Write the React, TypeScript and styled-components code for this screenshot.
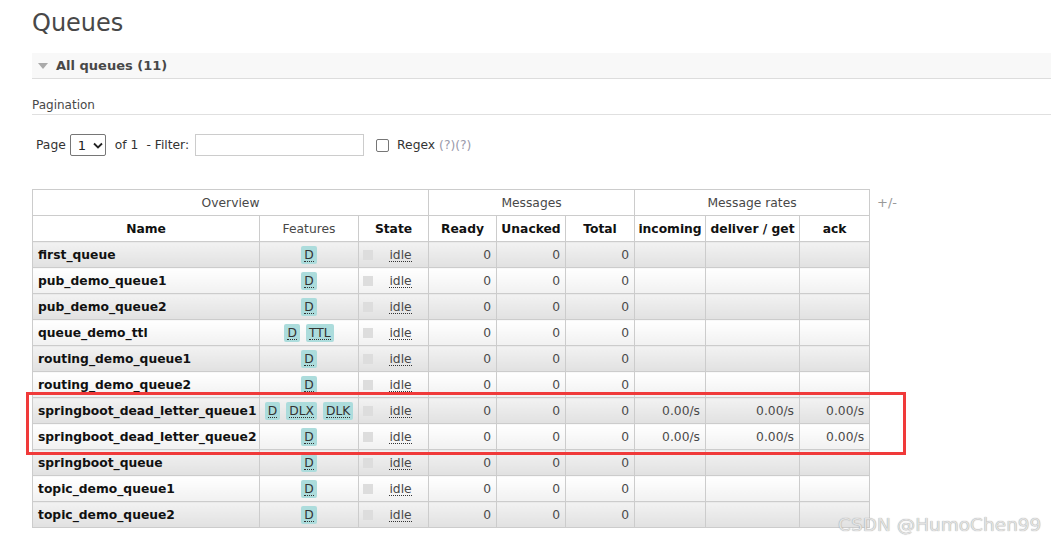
import React from 'react';
import styled, { createGlobalStyle } from 'styled-components';

const Global = createGlobalStyle`
  html, body { margin: 0; padding: 0; background: #fff; }
  body {
    font-family: "DejaVu Sans", Verdana, sans-serif;
    font-size: 12px;
    color: #484848;
    overflow: hidden;
  }
`;

const Page = styled.div`
  position: relative;
  width: 1051px;
  height: 544px;
  overflow: hidden;
  padding-left: 32px;
  box-sizing: border-box;
`;

const Title = styled.h1`
  margin: 8px 0 0 0;
  font-size: 24px;
  line-height: 30px;
  font-weight: normal;
  color: #484848;
`;

const SectionBar = styled.div`
  margin-top: 15px;
  height: 25px;
  background: #f8f8f8;
  border-bottom: 1px solid #ddd;
  display: flex;
  align-items: center;
  gap: 8px;
  padding-left: 6px;
  width: 1100px;
`;

const Triangle = styled.span`
  width: 0;
  height: 0;
  border-left: 5px solid transparent;
  border-right: 5px solid transparent;
  border-top: 6px solid #aaa;
  margin-top: 1px;
`;

const SectionTitle = styled.span`
  font-size: 13px;
  font-weight: bold;
  color: #484848;
`;

const SubHead = styled.div`
  margin-top: 19px;
  padding-bottom: 2px;
  line-height: 14px;
  font-size: 12px;
  color: #484848;
  border-bottom: 1px solid #e0e0e0;
  width: 1100px;
`;

const FilterRow = styled.div`
  margin-top: 19px;
  padding-left: 4px;
  display: flex;
  align-items: center;
  height: 22px;
  color: #333;
  font-size: 12.3px;
`;

const SelectBox = styled.div`
  margin-left: 4px;
  width: 36px;
  height: 22px;
  box-sizing: border-box;
  border: 1px solid #767676;
  border-radius: 2px;
  display: flex;
  align-items: center;
  padding-left: 7px;
  gap: 7px;
  color: #222;
  font-size: 13px;
`;

const Label = styled.span<{ $ml?: number }>`
  margin-left: ${(p) => p.$ml ?? 0}px;
  white-space: pre;
`;

const TextInput = styled.div`
  margin-left: 6px;
  width: 169px;
  height: 22px;
  box-sizing: border-box;
  border: 1px solid #ccc;
`;

const CheckBox = styled.span`
  margin-left: 12px;
  width: 13px;
  height: 13px;
  box-sizing: border-box;
  border: 1px solid #767676;
  border-radius: 2px;
`;

const Help = styled.span`
  color: #99a;
  margin-left: 4px;
`;

const TableWrap = styled.div`
  margin-top: 33px;
  display: flex;
  align-items: flex-start;
  gap: 7px;
`;

const Table = styled.table`
  border-collapse: collapse;
  table-layout: fixed;
  width: 837px;
  font-size: 12.3px;
`;

const Col = styled.col<{ $w: number }>`
  width: ${(p) => p.$w}px;
`;

const GroupTh = styled.th`
  height: 25px;
  padding: 0;
  border: 1px solid #ccc;
  font-weight: normal;
  color: #484848;
  background: #fff;
`;

const Th = styled.th<{ $light?: boolean }>`
  height: 25px;
  padding: 0 2px;
  border: 1px solid #ccc;
  font-weight: ${(p) => (p.$light ? 'normal' : 'bold')};
  color: ${(p) => (p.$light ? '#484848' : '#111')};
  background: #fff;
  white-space: nowrap;
`;

const Tr = styled.tr<{ $alt: boolean }>`
  td {
    background: ${(p) =>
      p.$alt
        ? 'linear-gradient(#f2f2f2, #e1e1e1)'
        : 'linear-gradient(#ffffff, #f1f1f1)'};
  }
`;

const NameTd = styled.td`
  height: 25px;
  padding: 0 5px;
  border: 1px solid #ccc;
  font-weight: bold;
  color: #111;
  white-space: nowrap;
  overflow: hidden;
`;

const FeatTd = styled.td`
  height: 25px;
  padding: 0 4px;
  border: 1px solid #ccc;
  text-align: center;
  white-space: nowrap;
`;

const StateTd = styled.td`
  height: 25px;
  padding: 0 4px;
  border: 1px solid #ccc;
`;

const NumTd = styled.td`
  height: 25px;
  padding: 0 5px;
  border: 1px solid #ccc;
  text-align: right;
  color: #484848;
  white-space: nowrap;
`;

const Badges = styled.span`
  display: inline-flex;
  gap: 6px;
  vertical-align: middle;
`;

const Badge = styled.span`
  display: inline-block;
  background: #acdcdc;
  border-radius: 2px;
  padding: 0 3px;
  height: 18px;
  line-height: 18px;
  color: #333;
`;

const Dotted = styled.span`
  border-bottom: 1px dotted #333;
  line-height: 12px;
  display: inline-block;
`;

const StateBox = styled.div`
  display: flex;
  align-items: center;
`;

const Square = styled.span`
  width: 10px;
  height: 10px;
  background: #ddd;
`;

const Idle = styled.span`
  flex: 1;
  text-align: center;
  color: #484848;
  padding-left: 4px;
`;

const Toggle = styled.span`
  color: #999;
  font-size: 13px;
  padding-top: 6px;
`;

const Highlight = styled.div`
  position: absolute;
  left: 26px;
  top: 392px;
  width: 874px;
  height: 57px;
  border: 3px solid #f03a3a;
`;

const Watermark = styled.div`
  position: absolute;
  left: 838px;
  top: 514px;
  font-family: "DejaVu Sans", sans-serif;
  font-size: 18.5px;
  color: #e2e2e2;
  text-shadow: 0 0 1px #8a8a8a;
`;

interface Queue {
  name: string;
  feats: string[];
  rates: boolean;
}

const queues: Queue[] = [
  { name: 'first_queue', feats: ['D'], rates: false },
  { name: 'pub_demo_queue1', feats: ['D'], rates: false },
  { name: 'pub_demo_queue2', feats: ['D'], rates: false },
  { name: 'queue_demo_ttl', feats: ['D', 'TTL'], rates: false },
  { name: 'routing_demo_queue1', feats: ['D'], rates: false },
  { name: 'routing_demo_queue2', feats: ['D'], rates: false },
  { name: 'springboot_dead_letter_queue1', feats: ['D', 'DLX', 'DLK'], rates: true },
  { name: 'springboot_dead_letter_queue2', feats: ['D'], rates: true },
  { name: 'springboot_queue', feats: ['D'], rates: false },
  { name: 'topic_demo_queue1', feats: ['D'], rates: false },
  { name: 'topic_demo_queue2', feats: ['D'], rates: false },
];

const widths = [227, 99, 70, 68, 69, 69, 71, 94, 70];

export default function App() {
  return (
    <Page>
      <Global />
      <Title>Queues</Title>
      <SectionBar>
        <Triangle />
        <SectionTitle>All queues (11)</SectionTitle>
      </SectionBar>
      <SubHead>Pagination</SubHead>
      <FilterRow>
        <Label>Page</Label>
        <SelectBox>
          1
          <svg width="10" height="7" viewBox="0 0 10 7">
            <path d="M1 1.5 L5 5.5 L9 1.5" fill="none" stroke="#222" strokeWidth="1.8" />
          </svg>
        </SelectBox>
        <Label $ml={9}>of 1</Label>
        <Label $ml={8}>- Filter:</Label>
        <TextInput />
        <CheckBox />
        <Label $ml={8}>Regex</Label>
        <Help>(?)(?)</Help>
      </FilterRow>
      <TableWrap>
        <Table>
          <colgroup>
            {widths.map((w, i) => (
              <Col key={i} $w={w} />
            ))}
          </colgroup>
          <thead>
            <tr>
              <GroupTh colSpan={3}>Overview</GroupTh>
              <GroupTh colSpan={3}>Messages</GroupTh>
              <GroupTh colSpan={3}>Message rates</GroupTh>
            </tr>
            <tr>
              <Th>Name</Th>
              <Th $light>Features</Th>
              <Th>State</Th>
              <Th>Ready</Th>
              <Th>Unacked</Th>
              <Th>Total</Th>
              <Th>incoming</Th>
              <Th>deliver / get</Th>
              <Th>ack</Th>
            </tr>
          </thead>
          <tbody>
            {queues.map((q, i) => (
              <Tr key={q.name} $alt={i % 2 === 0}>
                <NameTd>{q.name}</NameTd>
                <FeatTd>
                  <Badges>
                    {q.feats.map((f) => (
                      <Badge key={f}>
                        <Dotted>{f}</Dotted>
                      </Badge>
                    ))}
                  </Badges>
                </FeatTd>
                <StateTd>
                  <StateBox>
                    <Square />
                    <Idle>
                      <Dotted>idle</Dotted>
                    </Idle>
                  </StateBox>
                </StateTd>
                <NumTd>0</NumTd>
                <NumTd>0</NumTd>
                <NumTd>0</NumTd>
                <NumTd>{q.rates ? '0.00/s' : ''}</NumTd>
                <NumTd>{q.rates ? '0.00/s' : ''}</NumTd>
                <NumTd>{q.rates ? '0.00/s' : ''}</NumTd>
              </Tr>
            ))}
          </tbody>
        </Table>
        <Toggle>+/-</Toggle>
      </TableWrap>
      <Highlight />
      <Watermark>CSDN @HumoChen99</Watermark>
    </Page>
  );
}
